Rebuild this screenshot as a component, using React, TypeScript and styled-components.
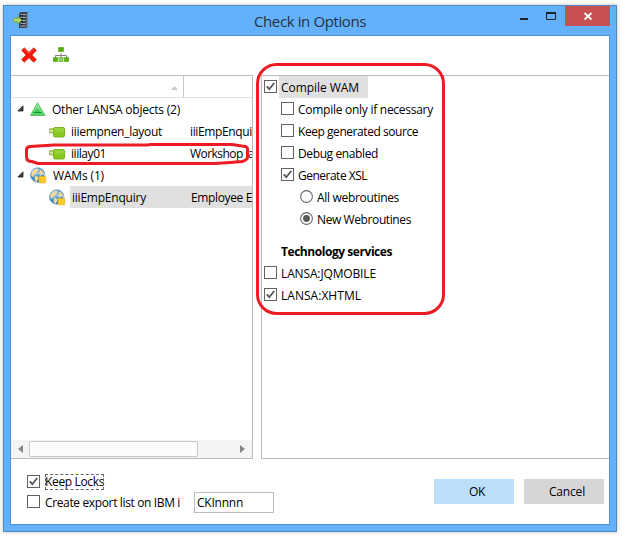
import React, { useLayoutEffect, useRef } from "react";
import styled, { createGlobalStyle, css } from "styled-components";

const GlobalStyle = createGlobalStyle`
  *, *::before, *::after { box-sizing: border-box; }
  html, body { margin: 0; background: #fff; }
  body { overflow: hidden; font-family: "Open Sans", "Noto Sans", sans-serif; font-size: 12px; color: #000; }
`;

const Stage = styled.main`
  position: relative;
  width: 622px;
  height: 536px;
  padding: 5px 0 0 3px;
`;

const Window = styled.section`
  width: 614px;
  height: 527px;
  display: flex;
  flex-direction: column;
  padding: 0 6px 6px;
  background: #63b1fc;
  border: 1px solid #4a8bc9;
  box-shadow: 0 0 4px rgba(0, 0, 0, 0.25);
`;

const TitleBar = styled.header`
  flex: 0 0 29px;
  height: 29px;
  display: grid;
  grid-template-columns: 92px 1fr 100px;
  align-items: start;
`;

const AppIcon = styled.div`
  padding: 6px 0 0 3px;
  line-height: 0;
`;

const Title = styled.h1`
  margin: 0;
  padding: 1px 0 0 152px;
  font-size: 15px;
  line-height: 28px;
  font-weight: 400;
  color: #26323f;
`;

const WindowButtons = styled.div`
  display: flex;
  justify-content: flex-end;
  height: 20px;
`;

const WindowButton = styled.div<{ $w: number; $close?: boolean }>`
  width: ${(p) => p.$w}px;
  height: 20px;
  line-height: 0;
  background: ${(p) => (p.$close ? "#c75050" : "transparent")};
`;

const Client = styled.div`
  flex: 1;
  display: flex;
  flex-direction: column;
  background: #fff;
  border: 1px solid #4f95d6;
`;

const Toolbar = styled.div`
  flex: 0 0 39px;
  display: flex;
  gap: 16px;
  padding: 11px 0 0 10px;
`;

const Panels = styled.div`
  flex: 0 0 384px;
  display: grid;
  grid-template-columns: 242px 1fr;
  column-gap: 8px;
`;

const TreePanel = styled.div`
  display: flex;
  flex-direction: column;
  overflow: hidden;
  border: solid #bcbcbc;
  border-width: 1px 1px 1px 0;
`;

const TreeHeader = styled.div`
  flex: 0 0 22px;
  display: grid;
  grid-template-columns: 173px 1fr;
  border-bottom: 1px solid #e4e4e4;
`;

const HeaderCell = styled.div<{ $divided?: boolean }>`
  display: flex;
  justify-content: flex-end;
  align-items: center;
  padding: 2px 5px 0 0;
  border-right: ${(p) => (p.$divided ? "1px solid #c8c8c8" : "none")};
`;

const TreeRows = styled.div`
  flex: 1;
  overflow: hidden;
`;

const TreeRow = styled.div<{ $level: number }>`
  display: flex;
  height: 22px;
  padding-left: ${(p) => (p.$level ? 38 : 6)}px;
`;

const Expander = styled.div`
  width: 13px;
  padding-top: 7px;
  line-height: 0;
`;

const RowIcon = styled.div`
  flex: 0 0 16px;
  padding-top: 4px;
  line-height: 0;
`;

const RowText = styled.div<{ $level: number; $selected?: boolean }>`
  flex: 1;
  display: grid;
  justify-items: start;
  grid-template-columns: ${(p) => (p.$level ? "119px" : "1fr")} 1fr;
  margin-left: ${(p) => (p.$level ? 4 : 0)}px;
  padding-left: ${(p) => (p.$level ? 2 : 6)}px;
  line-height: 23px;
  background: ${(p) => (p.$selected ? "#e0e0e0" : "transparent")};
`;

const ScrollBar = styled.div`
  flex: 0 0 18px;
  display: grid;
  grid-template-columns: 18px 169px 1fr 20px;
  align-items: center;
  justify-items: center;
  background: #f4f4f4;
`;

const Thumb = styled.div`
  width: 169px;
  height: 16px;
  background: #fcfcfc;
  border: 1px solid #c9c9c9;
  border-radius: 2px;
`;

const OptionsPanel = styled.div`
  border: solid #bcbcbc;
  border-width: 1px 0 1px 1px;
  padding-left: 2px;
`;

const OptionRow = styled.label<{ $indent?: number }>`
  display: flex;
  align-items: flex-start;
  height: 22px;
  padding-left: ${(p) => p.$indent ?? 0}px;
  & > svg { margin-top: 4px; }
`;

const OptionLabel = styled.span<{ $highlight?: boolean }>`
  height: 22px;
  line-height: 23px;
  margin-left: 2px;
  padding-left: 2px;
  ${(p) => p.$highlight && css`
    width: 89px;
    background: #e0e0e0;
  `}
`;

const OptionHeading = styled.h2`
  margin: 11px 0 0 17px;
  height: 21px;
  font-size: 12px;
  line-height: 22px;
  font-weight: 700;
`;

const Footer = styled.footer`
  flex: 1;
  display: flex;
  justify-content: space-between;
  padding: 15px 5px 0 16px;
`;

const FooterOptions = styled.div`
  display: grid;
  grid-template-columns: 167px 80px;
  grid-template-rows: 17px 23px;
`;

const FooterOption = styled.label`
  grid-column: 1;
  display: flex;
  align-items: flex-start;
  line-height: 15px;
  padding-top: 1px;
  gap: 5px;
`;

const ExportOption = styled(FooterOption)`
  padding-top: 4px;
`;

const FocusLabel = styled.span`
  width: 59px;
  height: 16px;
  margin-top: -1px;
  line-height: 16px;
  outline: 1px dashed #666;
  outline-offset: -1px;
`;

const ExportInput = styled.div`
  grid-column: 2;
  grid-row: 2;
  height: 21px;
  margin-top: 1px;
  padding-left: 2px;
  line-height: 20px;
  border: 1px solid #bdbdbd;
`;

const Buttons = styled.div`
  display: flex;
  gap: 10px;
  padding-top: 5px;
`;

const Button = styled.div<{ $primary?: boolean }>`
  width: 80px;
  height: 25px;
  padding-left: 6px;
  line-height: 26px;
  text-align: center;
  background: ${(p) => (p.$primary ? "#bbdefa" : "#d6d6d6")};
`;

const Annotations = styled.svg`
  position: absolute;
  inset: 0;
  pointer-events: none;
`;

const TextRun = styled.span`
  display: inline-block;
  white-space: pre;
`;

/** Text tracked so that its run occupies the given width. */
function Text({ children, w }: { children: string; w: number }) {
  const ref = useRef<HTMLSpanElement>(null);
  useLayoutEffect(() => {
    const el = ref.current;
    if (!el) return;
    el.style.letterSpacing = "0px";
    const natural = el.getBoundingClientRect().width;
    el.style.letterSpacing = `${(w - natural) / children.length}px`;
  }, [children, w]);
  return <TextRun ref={ref}>{children}</TextRun>;
}

const CheckBox = ({ checked }: { checked?: boolean }) => (
  <svg width="13" height="13" viewBox="0 0 13 13">
    <rect x=".5" y=".5" width="12" height="12" fill="#fff" stroke="#626262" />
    {checked && <path d="M2.8 6.4 5.3 9.2 10.2 3" fill="none" stroke="#555" strokeWidth="1.8" />}
  </svg>
);

const Radio = ({ checked }: { checked?: boolean }) => (
  <svg width="13" height="13" viewBox="0 0 13 13">
    <circle cx="6.5" cy="6.5" r="5.9" fill="#fff" stroke="#666" strokeWidth="1.1" />
    {checked && <circle cx="6.5" cy="6.5" r="3.4" fill="#585858" />}
  </svg>
);

const ServerIcon = () => (
  <svg width="16" height="17" viewBox="0 0 16 17">
    <path d="M6 1.5 7.5 0H15v14.5L13.5 16H6z" fill="#3c4650" />
    <path d="M13.5 1.5 15 0v14.5L13.5 16z" fill="#7d8790" />
    <path d="M7.5 2.5h5M7.5 5.5h5M7.5 8.5h5M7.5 11.5h5M7.5 14h5" stroke="#a9b2b8" />
    <path d="M8 3.8l2-.8M8 6.8l2-.8M8 9.8l2-.8M8 12.8l2-.8" stroke="#12171c" strokeWidth="1.2" />
    <path d="M.5 6.5h4v-2L9 8.2 4.5 12v-2.2h-4z" fill="#b4e05a" stroke="#739f38" strokeWidth=".8" />
  </svg>
);

const DeleteIcon = () => (
  <svg width="16" height="16" viewBox="0 0 16 16">
    <path
      d="M3.3.8 8 5.3 12.7.8l2.7 2.5L11 8l4.4 4.6-2.7 2.7L8 10.8l-4.7 4.5L.6 12.6 5 8 .6 3.3z"
      fill="#f01808"
      stroke="#d8382a"
      strokeWidth=".8"
      strokeLinejoin="round"
    />
    <path d="M3.3 2 8 6.5 12.7 2" fill="none" stroke="#ff6450" strokeWidth=".8" />
  </svg>
);

const HierarchyIcon = () => (
  <svg width="16" height="16" viewBox="0 0 16 16">
    <path d="M8 6v5M2.5 11V8.5h11V11" fill="none" stroke="#8d7791" />
    <path d="M5.5.5h5v4h-5zM.5 10.5h4v4h-4zM11.5 10.5h4v4h-4z" fill="#58ad0b" stroke="#6fb72e" />
    <path d="M6 10.5h4v4H6z" fill="#93cf68" stroke="#78ba4d" />
  </svg>
);

const TriangleIcon = () => (
  <svg width="16" height="16" viewBox="0 0 16 16">
    <defs>
      <linearGradient id="tri" x1="0" y1="0" x2="0" y2="1">
        <stop offset="0" stopColor="#a5eba8" />
        <stop offset=".55" stopColor="#6ee27a" />
        <stop offset="1" stopColor="#45d45b" />
      </linearGradient>
    </defs>
    <path d="M7.5.8 15 13.5H.5z" fill="url(#tri)" stroke="#5cbd64" strokeLinejoin="round" />
    <path d="M7.5 6.5 10.5 10.5h-6z" fill="#3fc25e" />
    <path d="M3.8 10.5h7.7" stroke="#148c39" />
  </svg>
);

const LayoutIcon = () => (
  <svg width="16" height="16" viewBox="0 0 16 16">
    <path d="M.8 4.5V8.500H4M.8 5H4" fill="none" stroke="#96bb45" strokeWidth="1.300" />
    <path d="M1.500 6h2.500v2H1.500z" fill="#d6e6a8" />
    <rect x="4.5" y="3.500" width="11" height="9.500" rx="1.500" fill="#86c820" stroke="#78b025" />
    <path d="M5.500 5h9M5.500 7h9" stroke="#a8d955" />
  </svg>
);

const GlobeIcon = () => (
  <svg width="17" height="17" viewBox="0 0 17 17" overflow="visible">
    <defs>
      <radialGradient id="globe" cx=".35" cy=".25" r=".85">
        <stop offset="0" stopColor="#b9def2" />
        <stop offset=".55" stopColor="#3d91ca" />
        <stop offset="1" stopColor="#1c659e" />
      </radialGradient>
    </defs>
    <g transform="translate(0 -.7)">
      <circle cx="7.7" cy="7.7" r="7.2" fill="url(#globe)" stroke="#4b8ab3" strokeWidth=".6" />
      <path d="M1.500 5 4.500 2l3-.8 1.200 1.400-2 1.800-.6 2-2 1-1 2.400-1.800-1.600zM9.500 2l3 1.500 2 3-2 1.500-2-1-1.500.4-.4-2 1.600-1zM5 8.500l3.500 1.200-.5 2.400-1.500 2.700-2-2.200z" fill="#f5d79a" />
      <path d="M10.500 9V8.300a2 2 0 0 1 4 0V9" fill="none" stroke="#c9cfd4" strokeWidth="1.200" />
      <rect x="9" y="9.200" width="6.800" height="6.300" rx=".6" fill="#ffc928" stroke="#efb01c" strokeWidth=".7" />
    </g>
  </svg>
);

const treeData = [
  { level: 0, name: "Other LANSA objects (2)", w: 128, icon: <TriangleIcon /> },
  { level: 1, name: "iiiempnen_layout", w: 91, icon: <LayoutIcon />, desc: "iiiEmpEnqui", dw: 62 },
  { level: 1, name: "iiilay01", w: 35, icon: <LayoutIcon />, desc: "Workshop la", dw: 64 },
  { level: 0, name: "WAMs (1)", w: 51, icon: <GlobeIcon /> },
  { level: 1, name: "iiiEmpEnquiry", w: 74, icon: <GlobeIcon />, desc: "Employee E", dw: 61, selected: true },
];

const compileOptions = [
  { label: "Compile only if necessary", w: 135 },
  { label: "Keep generated source", w: 120 },
  { label: "Debug enabled", w: 80 },
  { label: "Generate XSL", w: 69, checked: true },
];

export default function App() {
  return (
    <>
      <GlobalStyle />
      <Stage>
        <Window>
          <TitleBar>
            <AppIcon><ServerIcon /></AppIcon>
            <Title><Text w={112}>Check in Options</Text></Title>
            <WindowButtons>
              <WindowButton $w={27}>
                <svg width="27" height="20"><path d="M10 12h8v2h-8z" fill="#222" /></svg>
              </WindowButton>
              <WindowButton $w={28}>
                <svg width="28" height="20">
                  <path d="M9.5 7v6.5h9V7" fill="none" stroke="#222" />
                  <path d="M9 6h10v2H9z" fill="#222" />
                </svg>
              </WindowButton>
              <WindowButton $w={45} $close>
                <svg width="45" height="20"><path d="m19.500 7 7 6.500m0-6.500-7 6.500" stroke="#fff" strokeWidth="1.800" /></svg>
              </WindowButton>
            </WindowButtons>
          </TitleBar>
          <Client>
            <Toolbar>
              <DeleteIcon />
              <HierarchyIcon />
            </Toolbar>
            <Panels>
              <TreePanel>
                <TreeHeader>
                  <HeaderCell $divided>
                    <svg width="7" height="4"><path d="M0 4 3.500 0 7 4z" fill="#c9c9c9" /></svg>
                  </HeaderCell>
                  <HeaderCell />
                </TreeHeader>
                <TreeRows>
                  {treeData.map((row) => (
                    <TreeRow key={row.name} $level={row.level}>
                      {row.level === 0 && (
                        <Expander>
                          <svg width="7" height="7"><path d="M6 .8V6H.8z" fill="#404040" stroke="#222" strokeWidth=".8" /></svg>
                        </Expander>
                      )}
                      <RowIcon>{row.icon}</RowIcon>
                      <RowText $level={row.level} $selected={row.selected}>
                        <Text w={row.w}>{row.name}</Text>
                        {row.desc && <Text w={row.dw}>{row.desc}</Text>}
                      </RowText>
                    </TreeRow>
                  ))}
                </TreeRows>
                <ScrollBar>
                  <svg width="5" height="8"><path d="M5 0v8L0 4z" fill="#858585" /></svg>
                  <Thumb />
                  <span />
                  <svg width="5" height="8"><path d="M0 0v8l5-4z" fill="#858585" /></svg>
                </ScrollBar>
              </TreePanel>
              <OptionsPanel>
                <OptionRow>
                  <CheckBox checked />
                  <OptionLabel $highlight><Text w={78}>Compile WAM</Text></OptionLabel>
                </OptionRow>
                {compileOptions.map((o) => (
                  <OptionRow key={o.label} $indent={17}>
                    <CheckBox checked={o.checked} />
                    <OptionLabel><Text w={o.w}>{o.label}</Text></OptionLabel>
                  </OptionRow>
                ))}
                <OptionRow $indent={36}>
                  <Radio />
                  <OptionLabel><Text w={82}>All webroutines</Text></OptionLabel>
                </OptionRow>
                <OptionRow $indent={36}>
                  <Radio checked />
                  <OptionLabel><Text w={94}>New Webroutines</Text></OptionLabel>
                </OptionRow>
                <OptionHeading><Text w={111}>Technology services</Text></OptionHeading>
                <OptionRow>
                  <CheckBox />
                  <OptionLabel><Text w={95}>LANSA:JQMOBILE</Text></OptionLabel>
                </OptionRow>
                <OptionRow>
                  <CheckBox checked />
                  <OptionLabel><Text w={80}>LANSA:XHTML</Text></OptionLabel>
                </OptionRow>
              </OptionsPanel>
            </Panels>
            <Footer>
              <FooterOptions>
                <FooterOption>
                  <CheckBox checked />
                  <FocusLabel><Text w={59}>Keep Locks</Text></FocusLabel>
                </FooterOption>
                <ExportOption>
                  <CheckBox />
                  <Text w={135}>Create export list on IBM i</Text>
                </ExportOption>
                <ExportInput><Text w={46}>CKInnnn</Text></ExportInput>
              </FooterOptions>
              <Buttons>
                <Button $primary><Text w={16}>OK</Text></Button>
                <Button><Text w={36}>Cancel</Text></Button>
              </Buttons>
            </Footer>
          </Client>
        </Window>
        <Annotations width="622" height="536" fill="none" stroke="#ed1c24" strokeWidth="3">
          <rect x="257.5" y="64.5" width="186" height="249" rx="19" />
          <path d="M149 145H54L30 146.500Q26.500 147 26.500 150V157Q26.500 161.500 32 161.500L38 163.500H215L230 162.500 242 161.500Q247.500 160 247.500 157V149Q247.500 146 242 146L232 144.500H149" />
        </Annotations>
      </Stage>
    </>
  );
}
